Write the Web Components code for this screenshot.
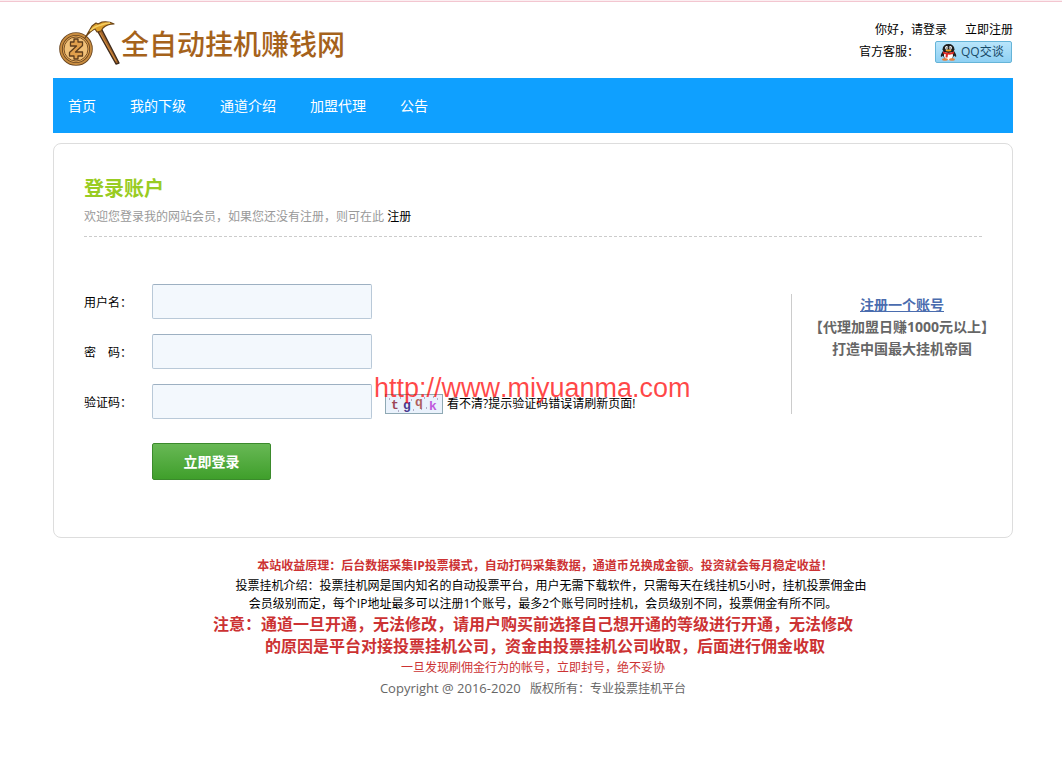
<!DOCTYPE html>
<html lang="zh-CN">
<head>
<meta charset="utf-8">
<meta name="viewport" content="width=device-width, initial-scale=1">
<title>全自动挂机赚钱网</title>
<style>
  body {
    margin: 0;
    background: #fff;
    color: #000;
    font: 12px/18px "Open Sans", "Noto Sans CJK SC", sans-serif;
  }
</style>
</head>
<body>
<site-page>
  <site-header slot="header"></site-header>
  <site-nav slot="nav"></site-nav>
  <login-card></login-card>
  <site-footer slot="footer"></site-footer>
</site-page>

<script>
function define(name, html) {
  const template = document.createElement('template');
  template.innerHTML = html;
  customElements.define(name, class extends HTMLElement {
    constructor() {
      super();
      this.attachShadow({ mode: 'open' }).append(template.content.cloneNode(true));
    }
  });
}

define('site-page', `
<style>
  :host { display: block; border-top: 1px solid #fbeef1; }
  .rule { height: 1px; background: #f3c6d0; }
  .wrap { max-width: 960px; margin: 0 auto; padding: 0 49px 0 53px; }
  main { margin-top: 10px; }
</style>
<div class="rule"></div>
<div class="wrap">
  <slot name="header"></slot>
  <slot name="nav"></slot>
  <main><slot></slot></main>
  <slot name="footer"></slot>
</div>`);

define('site-logo', `
<style>
  :host { display: block; }
  a { display: flex; align-items: center; color: #a5621b; text-decoration: none; font-size: 28px; font-weight: 500; line-height: 50px; }
  svg { display: block; }
  span { padding-top: 4px; }
</style>
<a href="#">
  <svg width="62" height="50" viewBox="0 0 62 50" aria-hidden="true">
    <circle cx="17" cy="32" r="15" fill="#e3a552" stroke="#6b4722" stroke-width="3.6"/>
    <circle cx="17" cy="32" r="15" fill="none" stroke="#c98d40" stroke-width="1.8"/>
    <circle cx="17" cy="32" r="12" fill="#f0c078" stroke="#7b5225" stroke-width="1"/>
    <path d="M11.500 25H15V22H19V25H23.500V28.500L16.500 35H23.500V39H19V42H15V39H10.500V35.500L17.500 29H11.500Z" fill="#e0a04c" stroke="#5d3d1c" stroke-width="1.3" stroke-linejoin="round"/>
    <path d="M38 13L42 11L60 46L57 47Z" fill="#a6672a" stroke="#3f2b1c" stroke-width="1.4" stroke-linejoin="round"/>
    <path d="M41 16L57 44" stroke="#d18e42" stroke-width="1"/>
    <path d="M26 21L33 9L37 6L39 7L43 5Q50 4 55 7Q48 7 44 11L42 14L38 15L36 12Q31 14 26 21Z" fill="#dfa22d" stroke="#694216" stroke-width="1.2" stroke-linejoin="round"/>
    <path d="M31 14Q36 9 42 8Q47 6 51 6" fill="none" stroke="#f5cf63" stroke-width="1.4"/>
  </svg>
  <span>全自动挂机赚钱网</span>
</a>`);

define('qq-button', `
<style>
  :host { display: block; }
  button {
    display: flex; align-items: center; gap: 4px; width: 77px; height: 22px; padding: 0 4px;
    border: 1px solid #65b4d8; border-radius: 2px; background: linear-gradient(#b9e5fb, #8ed0f3);
    color: #184a68; font: inherit; white-space: nowrap; cursor: pointer;
  }
  svg { flex: none; }
</style>
<button type="button">
  <svg width="17" height="18" viewBox="0 0 17 18" aria-hidden="true">
    <path d="M3 8Q0 12 1 14L4 12ZM14 8Q17 12 16 14L13 12Z" fill="#222"/>
    <ellipse cx="8.500" cy="11" rx="5.800" ry="6" fill="#222"/>
    <ellipse cx="8.500" cy="12.500" rx="4.500" ry="4.500" fill="#fff"/>
    <path d="M2.500 6.500Q3 1 8.500 1T14.500 6.500Q14 9 8.500 10Q3 9 2.500 6.500Z" fill="#1d1d1d"/>
    <ellipse cx="6.600" cy="4.800" rx="1.500" ry="1.900" fill="#fff"/>
    <ellipse cx="10.400" cy="4.800" rx="1.500" ry="1.900" fill="#fff"/>
    <circle cx="7" cy="5" r=".7"/><circle cx="10" cy="5" r=".7"/>
    <ellipse cx="8.500" cy="7.400" rx="3" ry="1" fill="#f5a41e"/>
    <path d="M3 8.500Q8.500 11 14 8.500L14 10.500Q11 12 8 11.500L7.500 14.500H5.500L5.800 11.200L3 10.500Z" fill="#df2b25"/>
    <ellipse cx="5" cy="16.500" rx="3" ry="1.200" fill="#e8803a"/>
    <ellipse cx="12" cy="16.500" rx="3" ry="1.200" fill="#e8803a"/>
  </svg>
  <span>QQ交谈</span>
</button>`);

define('site-header', `
<style>
  :host { display: flex; justify-content: space-between; height: 76px; }
  site-logo { padding: 13px 0 0 6px; }
  .side { display: flex; flex-direction: column; align-items: flex-end; padding-top: 19px; }
  .row { display: flex; align-items: center; gap: 18px; }
  .service { gap: 16px; height: 22px; margin: 2px 1px 0 0; }
  a { color: #000; text-decoration: none; }
</style>
<site-logo></site-logo>
<div class="side">
  <div class="row"><a href="#">你好，请登录</a><a href="#">立即注册</a></div>
  <div class="row service"><span>官方客服：</span><qq-button></qq-button></div>
</div>`);

define('site-nav', `
<style>
  :host { display: block; background: #0fa0ff; }
  nav { display: flex; gap: 34px; padding: 0 15px; }
  a { color: #fff; font-size: 14px; line-height: 55px; text-decoration: none; }
</style>
<nav>
  <a href="#">首页</a><a href="#">我的下级</a><a href="#">通道介绍</a><a href="#">加盟代理</a><a href="#">公告</a>
</nav>`);

customElements.define('form-field', class extends HTMLElement {
  connectedCallback() {
    if (this.shadowRoot) return;
    const root = this.attachShadow({ mode: 'open' });
    root.innerHTML = `
<style>
  :host { display: flex; align-items: center; height: 35px; }
  label { flex: none; width: 68px; padding-top: 2px; }
  input {
    box-sizing: border-box; width: 220px; height: 35px; padding: 0 8px; margin: 0;
    border: 1px solid #b9c9d8; border-top-color: #9db0c2; border-radius: 2px;
    background: #f3f8fd; font: inherit; outline: 0;
  }
</style>
<label for="field"></label><input id="field"><slot></slot>`;
    root.querySelector('label').textContent = this.getAttribute('label');
    root.querySelector('input').type = this.getAttribute('type') || 'text';
  }
});

define('captcha-code', `
<style>
  :host { display: block; }
  svg { display: block; box-sizing: border-box; border: 1px solid #8fa9b4; background: #eaf2fc; }
  text { font: bold 13px "Liberation Mono", monospace; }
</style>
<svg width="58" height="20" viewBox="0 0 56 18">
  <text x="5" y="14" fill="#9c4656">t</text>
  <text x="17" y="14" fill="#493a8f">g</text>
  <text x="29" y="11" fill="#b0605c">q</text>
  <text x="43" y="15" fill="#c05bdd">k</text>
  <path d="M3 4h1M14 3h1M25 5h1M38 3h1M40 13h1M51 4h1M27 15h1M12 16h1M35 14h1M47 2h1" stroke="#7c6a92"/>
</svg>`);

define('login-form', `
<style>
  :host { display: block; }
  form { display: flex; flex-direction: column; gap: 15px; }
  .hint { display: flex; align-items: center; gap: 4px; padding: 4px 0 0 13px; white-space: nowrap; }
  button {
    width: 119px; height: 37px; margin: 9px 0 0 68px; padding: 0;
    border: 1px solid #3b8a2c; border-radius: 2px; background: linear-gradient(#68b855, #3f9f2b);
    color: #fff; font: bold 14px/20px "Open Sans", "Noto Sans CJK SC", sans-serif; cursor: pointer;
  }
</style>
<form>
  <form-field label="用户名："></form-field>
  <form-field label="密　码：" type="password"></form-field>
  <form-field label="验证码：">
    <div class="hint"><captcha-code></captcha-code><span>看不清?提示验证码错误请刷新页面!</span></div>
  </form-field>
  <button type="submit">立即登录</button>
</form>`);

define('join-panel', `
<style>
  :host { display: block; border-left: 1px solid #ccc; text-align: center; color: #666; font-size: 14px; font-weight: bold; line-height: 22px; }
  p { margin: 0; }
  a { color: #4a6cae; }
</style>
<p><a href="#">注册一个账号</a></p>
<p>【代理加盟日赚1000元以上】</p>
<p>打造中国最大挂机帝国</p>`);

define('login-card', `
<style>
  :host { display: block; position: relative; border: 1px solid #ddd; border-radius: 8px; padding-bottom: 57px; }
  header { margin: 0 30px; padding: 31px 0 10px; border-bottom: 1px dashed #ccc; }
  h1 { margin: 0; color: #9c2; font-size: 20px; line-height: 28px; }
  header p { margin: 5px 0 0; color: #999; }
  header a { color: #000; text-decoration: none; }
  .body { display: flex; justify-content: space-between; padding: 47px 0 0 30px; }
  join-panel { box-sizing: border-box; width: 221px; height: 120px; margin-top: 10px; }
  .mark { position: absolute; left: 320px; top: 228px; color: #ff0000b8; font: 27px/32px "Liberation Sans", Arial, sans-serif; font-kerning: none; pointer-events: none; }
</style>
<header>
  <h1>登录账户</h1>
  <p>欢迎您登录我的网站会员，如果您还没有注册，则可在此 <a href="#">注册</a></p>
</header>
<div class="body"><login-form></login-form><join-panel></join-panel></div>
<div class="mark">http://www.miyuanma.com</div>`);

define('site-footer', `
<style>
  :host { display: block; padding: 18px 0 72px; text-align: center; }
  p { margin: 0; }
  .red { color: #cc3233; }
  .lead { padding-left: 24px; font-weight: bold; line-height: 20px; }
  .intro { padding: 1px 0 0 20px; text-indent: 16px; }
  .note { font-size: 16px; font-weight: bold; line-height: 22px; }
  .shift { padding-left: 24px; }
  .tail { line-height: 20px; }
  .tail:first-of-type, .shift + .tail { padding-top: 1px; }
  .copy { color: #666; white-space: pre; }
  .latin { font-size: 13px; }
</style>
<footer>
  <p class="red lead">本站收益原理：后台数据采集IP投票模式，自动打码采集数据，通道币兑换成金额。投资就会每月稳定收益！</p>
  <p class="intro">投票挂机介绍：投票挂机网是国内知名的自动投票平台，用户无需下载软件，只需每天在线挂机5小时，挂机投票佣金由<br>会员级别而定，每个IP地址最多可以注册1个账号，最多2个账号同时挂机，会员级别不同，投票佣金有所不同。</p>
  <p class="red note">注意：通道一旦开通，无法修改，请用户购买前选择自己想开通的等级进行开通，无法修改</p>
  <p class="red note shift">的原因是平台对接投票挂机公司，资金由投票挂机公司收取，后面进行佣金收取</p>
  <p class="red tail">一旦发现刷佣金行为的帐号，立即封号，绝不妥协</p>
  <p class="tail copy"><span class="latin">Copyright @ 2016-2020</span>   版权所有：专业投票挂机平台</p>
</footer>`);
</script>
</body>
</html>
